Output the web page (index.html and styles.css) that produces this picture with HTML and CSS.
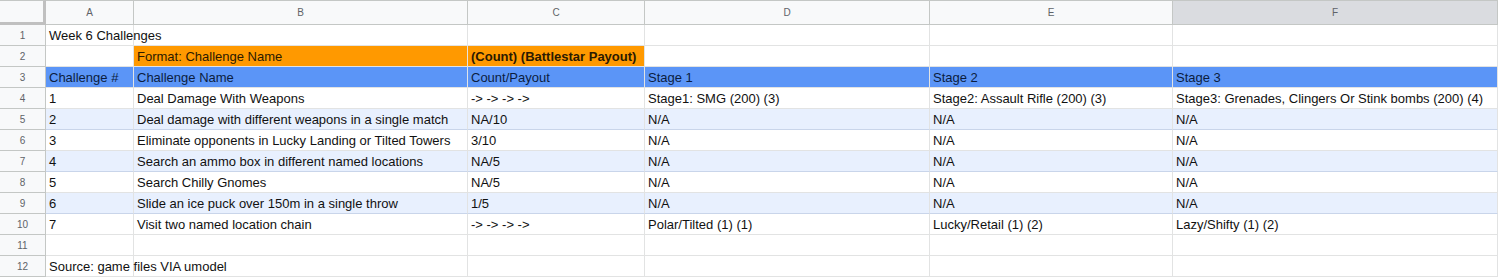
FILE: index.html
```html
<!DOCTYPE html>
<html>
<head>
<meta charset="utf-8">
<link rel="stylesheet" href="styles.css">
</head>
<body>
<div class="sheet">
  <div class="corner"></div>
  <div class="colhead">A</div>
  <div class="colhead">B</div>
  <div class="colhead">C</div>
  <div class="colhead">D</div>
  <div class="colhead">E</div>
  <div class="colhead sel">F</div>

  <div class="rowhead">1</div>
  <div class="cell">Week 6 Challenges</div><div class="cell"></div><div class="cell"></div><div class="cell"></div><div class="cell"></div><div class="cell"></div>

  <div class="rowhead">2</div>
  <div class="cell"></div><div class="cell orange">Format: Challenge Name</div><div class="cell orange bold">(Count) (Battlestar Payout)</div><div class="cell"></div><div class="cell"></div><div class="cell"></div>

  <div class="rowhead">3</div>
  <div class="cell blue">Challenge #</div><div class="cell blue">Challenge Name</div><div class="cell blue">Count/Payout</div><div class="cell blue">Stage 1</div><div class="cell blue">Stage 2</div><div class="cell blue">Stage 3</div>

  <div class="rowhead">4</div>
  <div class="cell">1</div><div class="cell">Deal Damage With Weapons</div><div class="cell arrows">-&gt; -&gt; -&gt; -&gt;</div><div class="cell">Stage1: SMG (200) (3)</div><div class="cell">Stage2: Assault Rifle (200) (3)</div><div class="cell">Stage3: Grenades, Clingers Or Stink bombs (200) (4)</div>

  <div class="rowhead">5</div>
  <div class="cell alt">2</div><div class="cell alt">Deal damage with different weapons in a single match</div><div class="cell alt">NA/10</div><div class="cell alt">N/A</div><div class="cell alt">N/A</div><div class="cell alt">N/A</div>

  <div class="rowhead">6</div>
  <div class="cell">3</div><div class="cell">Eliminate opponents in Lucky Landing or Tilted Towers</div><div class="cell">3/10</div><div class="cell">N/A</div><div class="cell">N/A</div><div class="cell">N/A</div>

  <div class="rowhead">7</div>
  <div class="cell alt">4</div><div class="cell alt">Search an ammo box in different named locations</div><div class="cell alt">NA/5</div><div class="cell alt">N/A</div><div class="cell alt">N/A</div><div class="cell alt">N/A</div>

  <div class="rowhead">8</div>
  <div class="cell">5</div><div class="cell">Search Chilly Gnomes</div><div class="cell">NA/5</div><div class="cell">N/A</div><div class="cell">N/A</div><div class="cell">N/A</div>

  <div class="rowhead">9</div>
  <div class="cell alt">6</div><div class="cell alt">Slide an ice puck over 150m in a single throw</div><div class="cell alt">1/5</div><div class="cell alt">N/A</div><div class="cell alt">N/A</div><div class="cell alt">N/A</div>

  <div class="rowhead">10</div>
  <div class="cell">7</div><div class="cell">Visit two named location chain</div><div class="cell arrows">-&gt; -&gt; -&gt; -&gt;</div><div class="cell">Polar/Tilted (1) (1)</div><div class="cell">Lucky/Retail (1) (2)</div><div class="cell">Lazy/Shifty (1) (2)</div>

  <div class="rowhead">11</div>
  <div class="cell"></div><div class="cell"></div><div class="cell"></div><div class="cell"></div><div class="cell"></div><div class="cell"></div>

  <div class="rowhead">12</div>
  <div class="cell">Source: game files VIA umodel</div><div class="cell"></div><div class="cell"></div><div class="cell"></div><div class="cell"></div><div class="cell"></div>
</div>
</body>
</html>
```
FILE: styles.css
```css
html, body {
  margin: 0;
  padding: 0;
  background: #ffffff;
}

.sheet {
  display: grid;
  grid-template-columns: 46px 88px 334px 177px 285px 243px 1fr;
  grid-template-rows: 25px repeat(12, 21px);
  width: 1498px;
  font-family: "Liberation Sans", Arial, sans-serif;
  font-size: 13px;
  color: #000;
}

.sheet > div {
  box-sizing: border-box;
  border-right: 1px solid #e2e3e3;
  border-bottom: 1px solid #e2e3e3;
  white-space: nowrap;
  overflow: visible;
}

.corner {
  background: #f8f9fa;
  border-top: 1px solid #c4c7c5;
  border-right: 3px solid #c0c0c0 !important;
  border-bottom: 3px solid #c0c0c0 !important;
}

.colhead {
  background: #f8f9fa;
  border-top: 1px solid #c4c7c5;
  border-right: 1px solid #c4c7c5 !important;
  border-bottom: 1px solid #c4c7c5 !important;
  color: #5f6368;
  font-size: 10px;
  display: flex;
  align-items: center;
  justify-content: center;
}

.colhead.sel {
  background: #dadce0;
}

.rowhead {
  background: #f8f9fa;
  border-right: 1px solid #c4c7c5 !important;
  border-bottom: 1px solid #c4c7c5 !important;
  color: #5f6368;
  font-size: 10px;
  display: flex;
  align-items: center;
  justify-content: center;
}

.cell {
  padding: 0 3px 2px 3px;
  line-height: 15px;
  display: flex;
  align-items: flex-end;
  color: #111;
}

.cell.orange {
  background: #ff9900;
  color: #2b1a00;
}

.cell.bold {
  font-weight: bold;
}

.cell.blue {
  background: #5b95f7;
  color: #0b1d3f;
}

.cell.alt {
  background: #e8f0fe;
  border-bottom-color: #c9d5ea;
}

.cell.arrows {
  letter-spacing: 0;
}
```
